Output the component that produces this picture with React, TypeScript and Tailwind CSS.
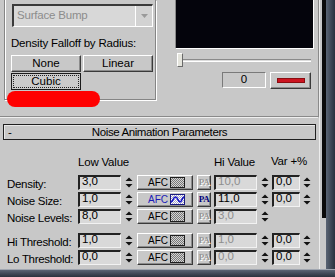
import React from "react";

const raised =
  "bg-[#c8c8c8] border border-t-white border-l-white border-r-[#3a3a3a] border-b-[#3a3a3a] shadow-[inset_-1px_-1px_0_#8c8c8c]";

function Spinner({ className = "" }: { className?: string }) {
  return (
    <svg width="10" height="15" viewBox="0 0 10 15" className={"shrink-0 " + className}>
      <path d="M1.5 6h7L5 2.5z" fill="#111" />
      <path d="M1.5 9h7L5 12.5z" fill="#111" />
    </svg>
  );
}

function Field({ value, dim, className = "" }: { value: string; dim?: boolean; className?: string }) {
  return (
    <div
      className={
        "h-[15px] shrink-0 bg-[#d9d9d9] border-t-2 border-l-2 border-t-[#222] border-l-[#222] border-b border-r border-b-[#f2f2f2] border-r-[#f2f2f2] pl-[2px] text-[11.5px] leading-[9px] " +
        (dim ? "text-[#8e8e8e] " : "text-black ") +
        className
      }
    >
      {value}
    </div>
  );
}

function Swatch({ wave }: { wave?: boolean }) {
  if (wave) {
    return (
      <div className="ml-[2px] w-[15px] h-[11px] border border-[#1a1a80] bg-[repeating-conic-gradient(#a8a8c8_0%_25%,#ffffff_0%_50%)] bg-[length:2px_2px]">
        <svg width="13" height="9" viewBox="0 0 13 9">
          <path d="M0 7C2 7 2 2 4.5 2S7 7 9 7S11 2 13 2" fill="none" stroke="#1010c8" strokeWidth="1.6" />
        </svg>
      </div>
    );
  }
  return (
    <div className="ml-[2px] w-[15px] h-[11px] border border-[#1e1e1e] bg-[repeating-conic-gradient(#787878_0%_25%,#d4d4d4_0%_50%)] bg-[length:2px_2px]" />
  );
}

function Afc({ active }: { active?: boolean }) {
  return (
    <div className={"ml-[3px] w-[56px] h-[15px] shrink-0 flex items-center pl-[10px] " + raised}>
      <span className={"text-[10px] leading-none " + (active ? "text-[#1c1cb8]" : "text-black")}>AFC</span>
      <Swatch wave={active} />
    </div>
  );
}

function Pa({ active }: { active?: boolean }) {
  return (
    <div
      className={
        "ml-[4px] w-[14px] h-[15px] shrink-0 flex items-center justify-center font-['Liberation_Serif',serif] font-bold text-[9px] leading-none tracking-[-0.3px] " +
        raised +
        (active ? " text-[#00007a]" : " text-[#979797] [text-shadow:1px_1px_0_#fff]")
      }
    >
      PA
    </div>
  );
}

type RowProps = {
  label: string;
  low: string;
  hi: string;
  hiDim?: boolean;
  vary?: string;
  active?: boolean;
  className?: string;
};

function Row({ label, low, hi, hiDim, vary, active, className = "" }: RowProps) {
  return (
    <div className={"flex h-[15px] pl-[7px] " + className}>
      <div className="w-[71px] shrink-0 pt-[3px] text-[11.5px] leading-[12px] tracking-[-0.3px] whitespace-nowrap">{label}</div>
      <Field value={low} className="w-[43px]" />
      <Spinner className="ml-[3px]" />
      <Afc active={active} />
      <Pa active={active} />
      <Field value={hi} dim={hiDim} className="ml-[3px] w-[43px]" />
      <Spinner className="ml-[3px]" />
      {vary !== undefined && (
        <>
          <Field value={vary} className="ml-[2px] w-[28px]" />
          <Spinner className="ml-[2px]" />
        </>
      )}
    </div>
  );
}

export default function App() {
  return (
    <div className="w-[335px] h-[277px] overflow-hidden bg-[#2e3644] font-['Liberation_Sans',Arial,sans-serif] text-[11px] text-black">
      <div className="flex h-[269px]">
        <div className="relative w-[320px] h-full bg-[#c8c8c8] border-r border-r-[#ececec]">
          {/* top rollout */}
          <div className="flex w-[319px] h-[118px] border-r border-r-[#8a8a8a] border-b border-b-[#efefef] shadow-[inset_0_-1px_0_#8a8a8a]">
            <div className="ml-[4px] w-[152px] h-[100px] flex flex-col border-l border-r border-b border-[#858585] shadow-[inset_1px_0_0_#fff,1px_1px_0_#fff]">
              <div className="ml-[7px] mt-[4px] w-[141px] h-[23px] flex border-t-2 border-l-2 border-t-[#3a3a3a] border-l-[#3a3a3a] border-b border-r border-b-white border-r-white bg-[#d8d8d8]">
                <div className="flex-1 pl-[3px] pt-[3px] text-[11.5px] text-[#8c8c8c] tracking-[-0.2px] leading-[13px]">Surface Bump</div>
                <div className="w-[17px] h-full flex items-center justify-center border-l border-l-white bg-[#d2d2d2]">
                  <svg width="7" height="4" viewBox="0 0 7 4">
                    <path d="M0 0h7L3.5 4z" fill="#9a9a9a" />
                  </svg>
                </div>
              </div>
              <div className="ml-[6px] mt-[10px] text-[11.5px] leading-[13px] tracking-[-0.2px]">Density Falloff by Radius:</div>
              <div className="ml-[6px] mt-[5px] grid grid-cols-[70px_70px] gap-x-[2px] gap-y-[1px] text-[11.5px]">
                <div className={"h-[17px] flex items-center justify-center " + raised}>None</div>
                <div className={"h-[17px] flex items-center justify-center " + raised}>Linear</div>
                <div className="h-[17px] border border-[#1a1a1a] p-[1px] bg-[#cbcbcb]">
                  <div className="h-full border border-dotted border-[#222] flex items-center justify-center">Cubic</div>
                </div>
              </div>
            </div>

            <div className="ml-[19px] w-[139px] flex flex-col">
              <div className="h-[49px] bg-[#04040c] border-l border-l-[#8a8a8a] border-r border-r-white border-b border-b-white" />
              <div className="mt-[4px] h-[14px] flex items-center pr-[3px]">
                <div className="ml-[2px] w-[6px] h-[14px] bg-[#e4e4dc] border border-t-white border-l-white border-r-[#6a6a6a] border-b-[#6a6a6a]" />
                <div className="flex-1 h-[3px] border-t border-t-[#8a8a8a] border-b border-b-white bg-[#dcdcdc]" />
              </div>
              <div className="mt-[5px] flex justify-end gap-[4px] pr-[3px]">
                <div className="w-[44px] h-[16px] border-t border-l border-t-[#7a7a7a] border-l-[#7a7a7a] border-b border-r border-b-white border-r-white flex items-center justify-center text-[11.5px]">
                  0
                </div>
                <div className={"w-[41px] h-[17px] flex items-center justify-center " + raised}>
                  <div className="w-[28px] h-[5px] bg-[#cc1420] border border-[#8a0c10]" />
                </div>
              </div>
            </div>
          </div>

          {/* red marker */}
          <div className="absolute left-[7px] top-[91px] w-[93px] h-[16px] rounded-full bg-[#ff0000] blur-[0.6px]" />

          {/* Noise Animation Parameters */}
          <div className="ml-[3px] mt-[6px] w-[313px] h-[16px] border border-[#202020] shadow-[inset_1px_1px_0_#e8e8e8] grid grid-cols-[24px_1fr_24px] items-center leading-[13px] text-[11.5px]">
            <span className="pl-[4px]">-</span>
            <span className="text-center tracking-[-0.4px]">Noise Animation Parameters</span>
            <span />
          </div>

          <div className="mt-[16px] h-[13px] flex leading-[13px] text-[11.5px] tracking-[-0.2px]">
            <span className="ml-[78px] w-[136px]">Low Value</span>
            <span className="w-[57px]">Hi Value</span>
            <span className="-mt-[1px]">Var +%</span>
          </div>

          <div className="mt-[6px] flex flex-col gap-[2px]">
            <Row label="Density:" low="3,0" hi="10,0" hiDim vary="0,0" />
            <Row label="Noise Size:" low="1,0" hi="11,0" vary="0,0" active />
            <Row label="Noise Levels:" low="8,0" hi="3,0" hiDim />
            <Row label="Hi Threshold:" low="1,0" hi="1,0" hiDim vary="0,0" className="mt-[7px]" />
            <Row label="Lo Threshold:" low="0,0" hi="0,0" hiDim vary="0,0" />
          </div>
        </div>

        <div className="w-[6px] h-full bg-[#c8c8c8] flex justify-end">
          <div className="w-[4px] h-[218px] bg-[#0a0a0a]" />
        </div>
        <div className="flex-1 h-full bg-linear-to-r from-[#5a6474] to-[#2a323e]" />
      </div>
      <div className="h-[8px] border-t border-t-[#a0a6b0] bg-linear-to-b from-[#5a6474] to-[#2a323e]" />
    </div>
  );
}
